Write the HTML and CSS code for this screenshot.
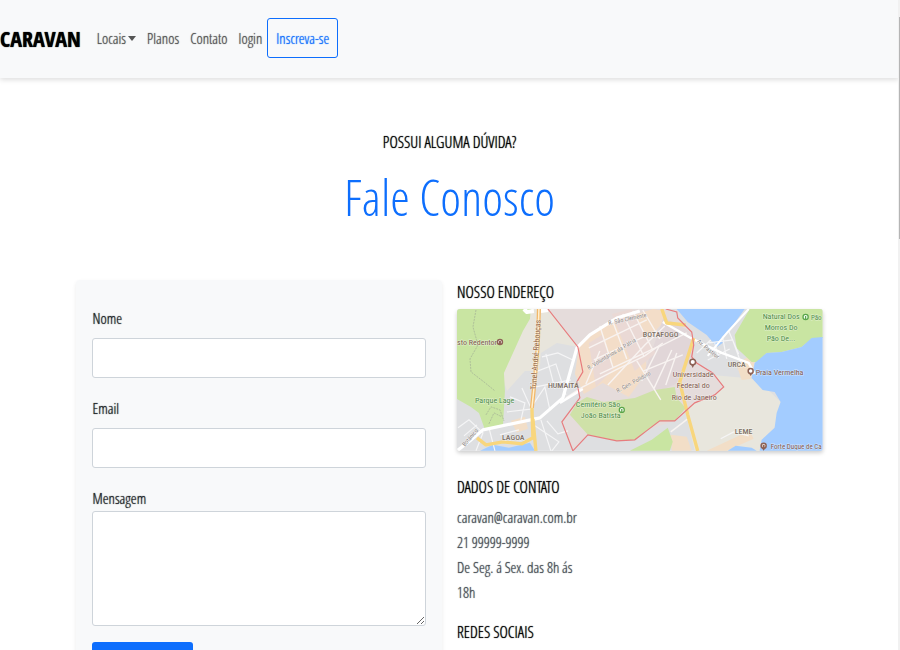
FILE: index.html
```html
<!DOCTYPE html>
<html lang="pt-BR">
<head>
<meta charset="utf-8">
<meta name="viewport" content="width=device-width, initial-scale=1">
<title>Caravan - Fale Conosco</title>
<link rel="stylesheet" href="styles.css">
</head>
<body>
<header class="navbar">
  <a class="brand" href="#">CARAVAN</a>
  <nav class="menu">
    <a class="menu-link" href="#">Locais<span class="caret"></span></a>
    <a class="menu-link" href="#">Planos</a>
    <a class="menu-link" href="#">Contato</a>
    <a class="menu-link" href="#">login</a>
  </nav>
  <button class="btn-outline" type="button">Inscreva-se</button>
</header>
<main class="page">
  <div class="intro">
    <p class="eyebrow">POSSUI ALGUMA DÚVIDA?</p>
    <h1 class="title">Fale Conosco</h1>
  </div>
  <div class="columns">
    <form class="card">
      <div class="field">
        <label for="nome">Nome</label>
        <input id="nome" type="text">
      </div>
      <div class="field">
        <label for="email">Email</label>
        <input id="email" type="email">
      </div>
      <div class="field field-message">
        <label for="mensagem">Mensagem</label>
        <textarea id="mensagem"></textarea>
      </div>
      <button class="btn-primary" type="submit" aria-label="Enviar"></button>
    </form>
    <div class="info">
      <h2 class="heading">NOSSO ENDEREÇO</h2>
      <svg class="map" viewBox="0 0 366 142" preserveAspectRatio="xMidYMid slice" role="img" aria-label="Mapa">
        <rect width="366" height="142" fill="#dedfe1"/>
        <!-- hills and beige land -->
        <path d="M74 0H92L121 37 114 62 68 62 50 82 44 64Z" fill="#e8e5dc"/>
        <path d="M84 44 100 34 121 38 121 90 80 100Z" fill="#dedfe1"/>
        <path d="M0 0H74L73 10 66 22 47 64 48 82 46 117 28 121 22 104 14 98 0 90Z" fill="#c9e5a2"/>
        <path d="M238 94 258 86 267 78 256 66 300 70 324 93 318 119 305 131 303 142H238L228 99Z" fill="#e8e6dd"/>
        <!-- built-up areas -->
        <path d="M92 0H209L221 9 235 23 238 53 256 64 267 78 258 86 238 94 218 112 191 121 160 132 131 126 116 142 105 113 123 89 126 63 121 38Z" fill="#e5dcdb"/>
        <path d="M122 38 145 17 196 0 209 2 205 15 188 33 190 63 172 88 146 74 127 85 118 65Z" fill="#f3ddc8"/>
        <path d="M207 8 234 23 235 49 219 75 200 83 188 62Z" fill="#e1d6d8"/>
        <path d="M155 5 175 0 199 44 178 62ZM132 34 145 26 156 61 139 78Z" fill="#ead9d5"/>
        <path d="M280 56 292 47 298 53 294 70 285 71ZM54 112 68 108 71 120 60 124ZM214 126 230 128 235 142H215ZM250 142 293 122 297 130 270 142Z" fill="#f2dec7"/>
        <!-- parks -->
        <path d="M120 94 130 88 147 93 178 89 198 81 218 78 220 89 229 99 218 112 203 112 191 121 178 131 160 132 131 126 113 106Z" fill="#cfe1a8"/>
        <path d="M173 142 195 131 211 119 216 133 213 142Z" fill="#c9e5a2"/>
        <path d="M293 0H366V29L355 30 345 38 325 43 310 44 301 53 295 53 280 39 278 26Z" fill="#c9e5a2"/>
        <!-- sea and lagoon -->
        <path d="M220 0H288L273 21 265 28 266 34 260 38 250 26 231 13Z" fill="#a3ccff"/>
        <path d="M366 28V142H303L305 131 318 119 320 104 324 93 318 83 306 81 295 69 298 54 310 44 325 43 345 38 355 29Z" fill="#a3ccff"/>
        <path d="M23 142 36 136 52 139 73 134 78 142ZM271 142 279 137 295 139 300 142Z" fill="#a3ccff"/>
        <!-- minor streets -->
        <g fill="none" stroke="#f5f5f6" stroke-width="1.2">
          <path d="M85 48 101 44 116 51M76 64 99 55 109 86M89 45 98 80M79 78 114 71M65 79 74 99 88 78 93 101M53 88 68 94 64 111M50 103 76 100M78 117 102 133 95 142M84 111 94 142M90 112 101 125 111 122M1 119 12 111 26 124 19 142M7 127 20 116M32 119 38 142M43 126 62 121"/>
          <path d="M252 34 276 31 285 56M258 34 262 49M266 29 270 50M272 22 282 45M240 44 254 31M251 51 273 40M264 130 277 123 292 127"/>
        </g>
        <g fill="none" stroke="#f8f3f1" stroke-width="1.4">
          <path d="M143 17 156 58M155 10 170 50M166 5 187 47M176 2 196 41M186 1 203 30M132 39 190 11M137 51 200 22M143 65 205 36M129 75 143 42M151 76 188 36 208 17M185 72 202 38 230 24M187 62 226 46M197 80 215 41M209 76 220 44M180 52 204 91M214 123 231 110"/>
          <path d="M109 89 126 78 159 61 188 47 206 34"/>
        </g>
        <!-- main roads -->
        <g fill="none" stroke="#fff" stroke-linejoin="round">
          <path d="M0 142 13 132 26 121 83 109 106 89 120 39 133 26 160 9 183 2" stroke-width="3.2"/>
          <path d="M103 94 126 80M206 13 234 29 265 44 292 54 298 65" stroke-width="2.4"/>
          <path d="M292 0 271 23 251 47" stroke-width="2"/>
          <path d="M67 0 70 3 77 2M84 2 91 1" stroke-width="4"/>
        </g>
        <g fill="none" stroke-linejoin="round">
          <path d="M20 129 29 136 46 133 65 135 76 129 75 98M76 110 79 142M205 0 210 14 229 16M237 29 223 73 231 106 241 142" stroke="#f8d67d" stroke-width="3.4"/>
          <path d="M82 0 81 35 78 70 75 99" stroke="#f2b768" stroke-width="4"/>
          <path d="M82 0 81 35 78 70 75 99" stroke="#fff0cf" stroke-width="1.5"/>
        </g>
        <path d="M19 1 16 18 21 36 13 50 14 63 27 73 38 82M29 106 34 98 43 101 47 112M32 115 37 104 45 108" fill="none" stroke="#aebf99" stroke-width="1" stroke-dasharray="2 1"/>
        <path d="M91 0 121 38 126 63 120 73 123 89 105 113 116 142 131 126 160 132 178 131 191 121 203 112 218 112 238 94 258 86 267 78 256 64 240 54 235 48 237 36 235 23 221 9 220 3 209 0" fill="none" stroke="#e77b7d" stroke-width="1.2"/>
        <!-- place names -->
        <g class="map-area">
          <text x="91" y="79">HUMAITÁ</text>
          <text x="186" y="28">BOTAFOGO</text>
          <text x="45" y="131">LAGOA</text>
          <text x="271" y="58">URCA</text>
          <text x="278" y="125">LEME</text>
        </g>
        <g class="map-place">
          <text x="0" y="36">sto Redentor</text>
          <text x="216" y="68">Universidade</text>
          <text x="220" y="79">Federal do</text>
          <text x="215" y="91">Rio de Janeiro</text>
          <text x="299" y="66">Praia Vermelha</text>
          <text class="map-edge" x="365" y="140">Forte Duque de Ca</text>
        </g>
        <g class="map-park">
          <text x="18" y="94">Parque Lage</text>
          <text x="119" y="98">Cemitério São</text>
          <text x="124" y="109">João Batista</text>
          <text x="306" y="10">Natural Dos</text>
          <text x="308" y="21">Morros Do</text>
          <text x="310" y="32">Pão De...</text>
          <text class="map-edge" x="365" y="11">Pão</text>
        </g>
        <g class="map-street">
          <text transform="translate(152 16) rotate(-12)">R. São Clemente</text>
          <text transform="translate(132 61) rotate(-31)">R. Voluntários da Pátria</text>
          <text transform="translate(161 84) rotate(-29)">R. Gen. Polidoro</text>
          <text transform="translate(240 33) rotate(40)">Av. Pasteur</text>
          <text transform="translate(8 138) rotate(-50)">Botânico</text>
        </g>
        <text class="map-tunnel" transform="translate(79 81) rotate(-86)">Túnel André Rebouças</text>
        <!-- pins -->
        <g fill="#fff" stroke="#8d6255" stroke-width="1.5">
          <circle cx="43" cy="33" r="2.5"/>
          <circle cx="236" cy="53" r="2.8"/>
          <circle cx="294" cy="62" r="2.5"/>
          <circle cx="307" cy="137" r="2.5"/>
        </g>
        <g fill="#8d6255">
          <path d="M234 55 236 59 238 55ZM292 64 294 67 296 64ZM305 139 307 142 309 139ZM42 32H44V35H42ZM306 136H308V139H306Z"/>
        </g>
        <g fill="#fff" stroke="#5ba64b" stroke-width="1.3">
          <circle cx="165" cy="101" r="2.5"/>
          <circle cx="349" cy="8" r="2.6"/>
          <path d="M165 100V104M349 7V11"/>
        </g>
      </svg>
      <section class="block">
        <h2 class="heading">DADOS DE CONTATO</h2>
        <p>caravan@caravan.com.br</p>
        <p>21 99999-9999</p>
        <p class="hours">De Seg. á Sex. das 8h ás 18h</p>
      </section>
      <section class="block">
        <h2 class="heading">REDES SOCIAIS</h2>
      </section>
    </div>
  </div>
</main>
<div class="scroll-track"><div class="scroll-thumb"></div></div>
</body>
</html>
```
FILE: styles.css
```css
* {
  box-sizing: border-box;
}

html {
  scrollbar-width: none;
}

body {
  margin: 0;
  padding-right: 1px;
  background: #fff;
  color: #212529;
  font-family: "Open Sans Condensed Light", "Roboto Condensed", "Open Sans", sans-serif;
  font-size: 15px;
  font-weight: 400;
  line-height: 25px;
  text-shadow: 0 0 1px currentColor;
}

h1,
h2,
p {
  margin: 0;
}

.navbar {
  display: flex;
  align-items: center;
  min-height: 78px;
  padding-bottom: 2px;
  background: #f8f9fa;
  box-shadow: 0 2px 5px rgba(0, 0, 0, 0.13);
}

.brand {
  margin-right: 16px;
  color: #000;
  font-family: "Open Sans Condensed", "Roboto Condensed", sans-serif;
  font-size: 22px;
  font-weight: 700;
  line-height: 40px;
  text-decoration: none;
}

.menu {
  display: flex;
  gap: 11px;
  margin-right: 5px;
}

.menu-link {
  display: flex;
  align-items: center;
  color: #555;
  text-decoration: none;
}

.caret {
  margin-left: 2px;
  border: 4px solid transparent;
  border-top: 5px solid #555;
  border-bottom: 0;
}

.btn-outline {
  min-height: 40px;
  padding: 0 8px;
  border: 1px solid #0d6efd;
  border-radius: 3px;
  background: transparent;
  color: #0d6efd;
  font: inherit;
  text-shadow: inherit;
}

.page {
  width: 83%;
  margin: 0 auto;
  padding: 52px 0 40px;
}

.intro {
  margin-bottom: 41px;
  text-align: center;
}

.eyebrow,
.heading {
  color: #000;
  font-size: 16px;
  font-weight: 400;
  line-height: 25px;
}

.title {
  color: #0d6efd;
  font-size: 50px;
  font-weight: 400;
  line-height: 84px;
  text-shadow: none;
}

.columns {
  display: grid;
  grid-template-columns: 1fr 1fr;
  gap: 15px;
}

.card {
  padding: 26px 16px 24px;
  border-radius: 4px;
  background: #f8f9fa;
  box-shadow: 0 2px 4px rgba(0, 0, 0, 0.08);
}

.field {
  display: flex;
  flex-direction: column;
  gap: 7px;
  margin-bottom: 18px;
}

.field-message {
  gap: 0;
  margin-bottom: 16px;
}

.field input,
.field textarea {
  width: 100%;
  height: 40px;
  padding: 6px 10px;
  border: 1px solid #ced4da;
  border-radius: 3px;
  background: #fff;
  font: inherit;
}

.field textarea {
  height: 115px;
  resize: vertical;
}

.btn-primary {
  min-width: 101px;
  min-height: 40px;
  border: 0;
  border-radius: 3px;
  background: #0d6efd;
  color: #fff;
  font: inherit;
}

.map {
  display: block;
  width: 100%;
  margin: 4px 0 24px;
  border-radius: 3px;
  box-shadow: 0 2px 4px rgba(0, 0, 0, 0.2);
}

.map text {
  font-family: "Roboto Condensed", Roboto, sans-serif;
  font-size: 8px;
  font-weight: 400;
  text-shadow: none;
  paint-order: stroke;
  stroke: rgba(255, 255, 255, 0.5);
  stroke-width: 1px;
}

.map .map-area text {
  fill: #7d7065;
  font-weight: 500;
}

.map-place {
  fill: #80594e;
}

.map-park {
  fill: #4c8b47;
}

.map .map-edge {
  font-size: 7px;
  text-anchor: end;
}

.map .map-street text {
  fill: #8b8583;
  font-size: 6px;
}

.map .map-tunnel {
  fill: #95694a;
}

.block {
  margin-bottom: 15px;
  color: #495057;
}

.block .heading {
  margin-bottom: 5px;
}

.hours {
  max-width: 33%;
}

.scroll-track {
  position: fixed;
  top: 0;
  right: 0;
  width: 2px;
  height: 100%;
  padding-top: 17px;
  background: #f1f1f1;
}

.scroll-thumb {
  width: 1px;
  height: 35%;
  margin-left: auto;
  background: #b5b5b5;
}
```
